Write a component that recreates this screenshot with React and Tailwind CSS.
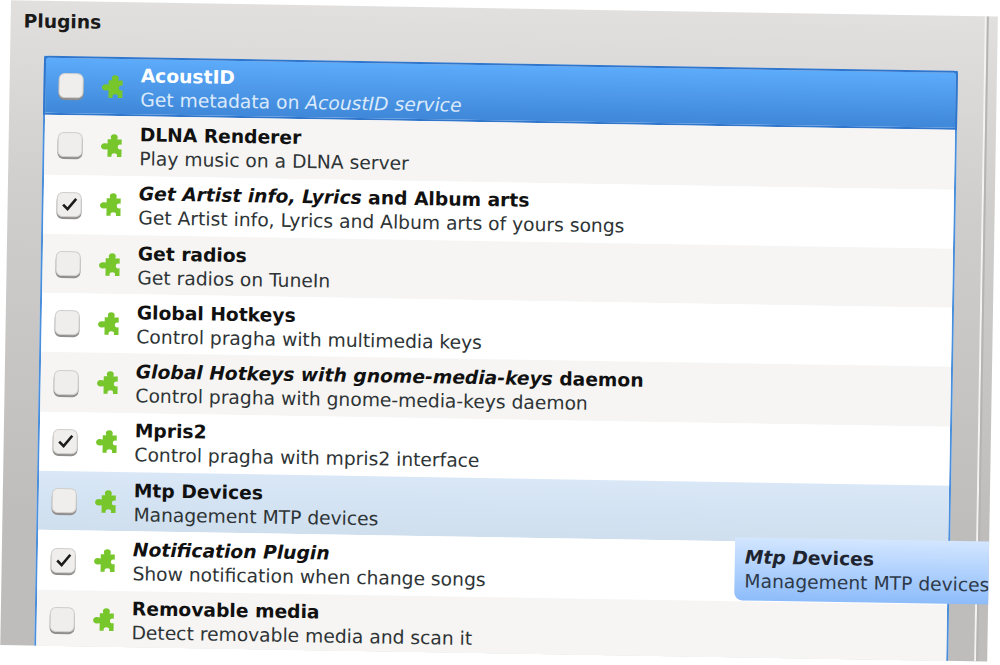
import React from 'react';

const plugins = [
  { title: 'AcoustID', desc: <>Get metadata on <em>AcoustID service</em></>, state: 'selected' },
  { title: 'DLNA Renderer', desc: 'Play music on a DLNA server' },
  { title: <><em>Get Artist info, Lyrics</em> and Album arts</>, desc: 'Get Artist info, Lyrics and Album arts of yours songs', checked: true },
  { title: 'Get radios', desc: 'Get radios on TuneIn' },
  { title: 'Global Hotkeys', desc: 'Control pragha with multimedia keys' },
  { title: <><em>Global Hotkeys with gnome-media-keys</em> daemon</>, desc: 'Control pragha with gnome-media-keys daemon' },
  { title: 'Mpris2', desc: 'Control pragha with mpris2 interface', checked: true },
  { title: 'Mtp Devices', desc: 'Management MTP devices', state: 'hover' },
  { title: <em>Notification Plugin</em>, desc: 'Show notification when change songs', checked: true },
  { title: 'Removable media', desc: 'Detect removable media and scan it' },
];

const PuzzleIcon = () => (
  <svg width="22" height="24" viewBox="0 0 22 24" className="shrink-0">
    <path
      d="M7 5.5 L10.5 5.5 L10 3.5 C10 1.5 11.5 .4 13.5 .4 C15.5 .4 17 1.5 17 3.5 L16.5 5.5 L21 5.5 L21 10.8 L19.5 10.6 C18 10.6 17.2 11.6 17.2 13 C17.2 14.4 18 15.4 19.5 15.4 L21 15.2 L21 23 L16.4 23 L16.6 21.6 C16.6 20.2 15.4 19.4 13.8 19.4 C12.2 19.4 11 20.2 11 21.6 L11.2 23 L7 23 L7 15.4 L4 15.8 C1.8 15.8 .4 14.4 .4 12.6 C.4 10.8 1.8 9.4 4 9.4 L7 9.8 Z"
      fill="#76c62c"
    />
  </svg>
);

const Checkbox = ({ checked }) => (
  <div className="flex h-[25px] w-[25px] shrink-0 items-center justify-center rounded-[6px] border border-[#cfcecc] bg-[#efeeec] shadow-[0_2px_0_#8f8e8c]">
    {checked && (
      <svg width="18" height="16" viewBox="0 0 18 16">
        <path d="M2.5 8.5 L7 13 L15.5 2.5" fill="none" stroke="#1c1c1c" strokeWidth="2.6" />
      </svg>
    )}
  </div>
);

const PluginRow = ({ plugin, index }) => {
  let rowClass = index % 2 === 0 ? 'bg-white' : 'bg-[#f6f5f3]';
  let descClass = 'text-[#2e3436]';
  let titleClass = 'text-[#111111]';
  if (plugin.state === 'selected') {
    rowClass = '-mx-[2px] rounded-t-[4px] border-2 border-[#2f76cc] bg-gradient-to-b from-[#5dabfb] to-[#3f87d8]';
    descClass = 'text-[#dbeafb]';
    titleClass = 'text-white';
  }
  if (plugin.state === 'hover') {
    rowClass = 'bg-gradient-to-b from-[#d9e7f7] to-[#cfdfee]';
  }
  return (
    <div className={`flex h-[59.3px] items-center ${rowClass}`}>
      <div className="flex items-center pl-[13px]">
        <Checkbox checked={plugin.checked} />
        <div className="ml-[18px]">
          <PuzzleIcon />
        </div>
        <div className="ml-[17px] pt-[2px] leading-[24px]">
          <div className={`text-[18.7px] font-bold ${titleClass}`}>{plugin.title}</div>
          <div className={`text-[18.7px] ${descClass}`}>{plugin.desc}</div>
        </div>
      </div>
    </div>
  );
};

export default function App() {
  return (
    <div className="h-[665px] w-[1000px] overflow-hidden bg-white font-['DejaVu_Sans',sans-serif]">
      <div className="h-[645px] w-[1000px] origin-top-left rotate-[0.95deg] pl-[11px]">
        <div className="relative flex h-[645px] w-[987px] overflow-hidden bg-gradient-to-b from-[#e1e0de] via-[#cfcecc] via-30% to-[#bebdbb] to-80%">
          <div className="w-[974px] shrink-0">
            <h1 className="h-[55px] pl-[13px] pt-[9px] text-[18.7px] font-bold leading-6 text-[#1a1a1a]">Plugins</h1>
            <div className="ml-[34px] w-[914px] border-x-2 border-[#4a8fdc] bg-white">
              {plugins.map((plugin, i) => (
                <PluginRow key={i} plugin={plugin} index={i} />
              ))}
            </div>
          </div>
          <div className="w-[2px] shrink-0 bg-[#f4f3f2]" />
          <div className="w-[2px] shrink-0 bg-[#b5b4b2]" />
          {/* tooltip for the hovered row */}
          <div className="absolute left-[733px] top-[525px] h-[63px] w-[260px] rounded-bl-[8px] bg-gradient-to-b from-[#d3e6ff] to-[#8dbcfa] pl-[10px] pt-[8px] leading-[24px]">
            <div className="text-[18.7px] font-bold text-[#1f2530]"><em>Mtp D</em>evices</div>
            <div className="whitespace-nowrap text-[18.7px] text-[#2e3a4a]">Management MTP devices</div>
          </div>
        </div>
      </div>
    </div>
  );
}
